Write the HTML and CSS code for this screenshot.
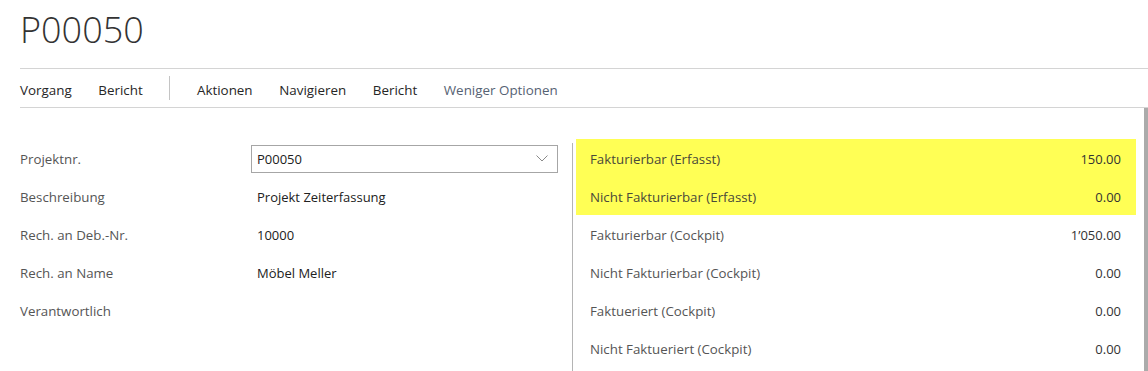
FILE: index.html
```html
<!DOCTYPE html>
<html lang="de">
<head>
  <meta charset="UTF-8">
  <title>P00050</title>
  <link rel="stylesheet" href="styles.css">
</head>
<body>
  <header class="kopf">
    <h1 class="titel">P00050</h1>
    <nav class="menue">
      <span>Vorgang</span>
      <span>Bericht</span>
      <span class="trenner"></span>
      <span>Aktionen</span>
      <span>Navigieren</span>
      <span>Bericht</span>
      <span class="weniger">Weniger Optionen</span>
    </nav>
  </header>

  <div class="inhalt">
    <main class="karte">
      <section class="allgemein">
        <div class="zeile">
          <span class="label">Projektnr.</span>
          <div class="auswahl">
            <span>P00050</span>
            <svg width="12" height="7" viewBox="0 0 12 7"><path d="M0.5 0.5 L6 6 L11.5 0.5" fill="none" stroke="#8a8a8a" stroke-width="1"/></svg>
          </div>
        </div>
        <div class="zeile">
          <span class="label">Beschreibung</span>
          <span class="wert">Projekt Zeiterfassung</span>
        </div>
        <div class="zeile">
          <span class="label">Rech. an Deb.-Nr.</span>
          <span class="wert">10000</span>
        </div>
        <div class="zeile">
          <span class="label">Rech. an Name</span>
          <span class="wert">Möbel Meller</span>
        </div>
        <div class="zeile">
          <span class="label">Verantwortlich</span>
          <span class="wert"></span>
        </div>
      </section>

      <div class="linie"></div>

      <section class="summen">
        <div class="markiert">
          <div class="zeile">
            <span class="label">Fakturierbar (Erfasst)</span>
            <span class="betrag">150.00</span>
          </div>
          <div class="zeile">
            <span class="label">Nicht Fakturierbar (Erfasst)</span>
            <span class="betrag">0.00</span>
          </div>
        </div>
        <div class="zeile">
          <span class="label">Fakturierbar (Cockpit)</span>
          <span class="betrag">1’050.00</span>
        </div>
        <div class="zeile">
          <span class="label">Nicht Fakturierbar (Cockpit)</span>
          <span class="betrag">0.00</span>
        </div>
        <div class="zeile">
          <span class="label">Faktueriert (Cockpit)</span>
          <span class="betrag">0.00</span>
        </div>
        <div class="zeile">
          <span class="label">Nicht Faktueriert (Cockpit)</span>
          <span class="betrag">0.00</span>
        </div>
      </section>
    </main>
    <div class="scrollbalken"></div>
  </div>
</body>
</html>
```

FILE: styles.css
```css
body {
  margin: 0;
  font-family: "Open Sans", "Noto Sans", sans-serif;
  font-size: 13px;
  color: #212121;
  background: #ffffff;
  overflow: hidden;
}
.kopf {
  padding-left: 20px;
}
.titel {
  margin: 0;
  height: 69px;
  box-sizing: border-box;
  padding-top: 5px;
  font-size: 36px;
  font-weight: 300;
  line-height: 50px;
  color: #333333;
  border-bottom: 1px solid #d4d4d4;
}
.menue {
  display: flex;
  align-items: center;
  gap: 26.6px;
  height: 39px;
  box-sizing: border-box;
  padding-top: 3px;
  border-bottom: 1px solid #d4d4d4;
  font-size: 13.4px;
  color: #262626;
}
.trenner {
  width: 1px;
  height: 24px;
  margin-top: -3px;
  background: #c4c4c4;
}
.weniger {
  color: #566273;
}
.inhalt {
  display: flex;
  height: 263px;
}
.karte {
  flex: 1;
  display: flex;
  padding: 31px 8px 0 20px;
}
.scrollbalken {
  width: 4px;
  background: #ababab;
}
.allgemein {
  width: 538px;
}
.zeile {
  display: flex;
  align-items: center;
  height: 38px;
  box-sizing: border-box;
  padding-top: 1px;
}
.label {
  font-size: 13.3px;
}
.allgemein .label {
  width: 231px;
  color: #555555;
}
.wert {
  padding-left: 6px;
}
.auswahl {
  width: 307px;
  height: 28px;
  box-sizing: border-box;
  border: 1px solid #a6a6a6;
  display: flex;
  align-items: center;
  justify-content: space-between;
  padding: 0 9px 0 5px;
}
.linie {
  width: 1px;
  margin: 4px 3px 0 14px;
  background: #b4b4b4;
}
.summen {
  width: 560px;
}
.markiert {
  background: #ffff55;
}
.summen .zeile {
  justify-content: space-between;
  padding: 1px 15px 0 14px;
}
.summen .label {
  color: #555555;
}
.markiert .label {
  color: #4a4a3a;
}
.betrag {
  color: #333333;
}
```
